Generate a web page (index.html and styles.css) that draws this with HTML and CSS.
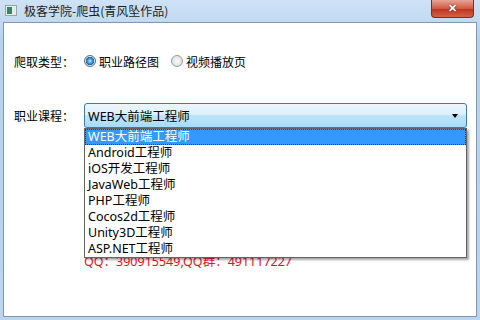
FILE: index.html
```html
<html>
<head>
	<meta charset="UTF-8">
	<title>极客学院-爬虫</title>
	<link rel="stylesheet" href="styles.css">
</head>
<body>
	<div id="window">
		<div id="titleBar">
			<span class="appIcon"><span></span></span>
			<span class="titleText">极客学院-爬虫(青风坠作品)</span>
			<span class="closeButton">&#x2715;</span>
		</div>
		<div id="client">
			<div class="formRow typeRow">
				<span class="fieldLabel">爬取类型：</span>
				<label class="radio"><span class="radioDot checked"></span>职业路径图</label>
				<label class="radio"><span class="radioDot"></span>视频播放页</label>
			</div>
			<div class="formRow">
				<span class="fieldLabel">职业课程：</span>
				<div class="combo">
					<div class="comboBox">
						<span>WEB大前端工程师</span>
						<span class="arrow"></span>
					</div>
					<ul class="dropList">
						<li class="selected">WEB大前端工程师</li>
						<li>Android工程师</li>
						<li>iOS开发工程师</li>
						<li>JavaWeb工程师</li>
						<li>PHP工程师</li>
						<li>Cocos2d工程师</li>
						<li>Unity3D工程师</li>
						<li>ASP.NET工程师</li>
					</ul>
				</div>
			</div>
			<div class="contact">QQ：390915549,QQ群：491117227</div>
		</div>
	</div>
</body>
</html>
```

FILE: styles.css
```css
body {
	margin: 0;
	font-family: "Noto Sans", "Noto Sans CJK SC", sans-serif;
	font-size: 12.5px;
	color: #000;
}
#window {
	width: 480px;
	height: 320px;
	box-sizing: border-box;
	display: flex;
	flex-direction: column;
	background: linear-gradient(#cfe2f6, #b8d2ec 40px, #bcd4ee);
	padding: 0 3px 3px 3px;
}
#titleBar {
	height: 22px;
	flex: none;
	display: flex;
	align-items: flex-start;
	position: relative;
}
.appIcon {
	width: 12px;
	height: 11px;
	margin: 5px 0 0 2px;
	background: #e8ece8;
	border: 1px solid #9aa7a0;
	box-sizing: border-box;
	display: flex;
}
.appIcon span {
	width: 5px;
	margin: 1px;
	background: #2f8a6c;
}
.titleText {
	margin: 3px 0 0 7px;
	font-size: 12px;
	line-height: 16px;
	font-family: "Noto Sans CJK SC", sans-serif;
	color: #1e1e1e;
}
.closeButton { /* sits over the frame corner */
	position: absolute;
	top: 0;
	right: 3px;
	width: 43px;
	height: 18px;
	box-sizing: border-box;
	border: 1px solid #6d3228;
	border-top: none;
	border-radius: 0 0 4px 4px;
	background: linear-gradient(#e9a496, #cf5a44 50%, #c0361f 55%, #d2614a);
	color: #fff;
	font-size: 11px;
	font-weight: bold;
	text-align: center;
	line-height: 16px;
	text-shadow: 0 0 2px #5a1a10;
}
#client {
	flex: 1;
	background: #fff;
	border: 1px solid #7f97b0;
	padding: 30px 0 0 10px;
}
.formRow {
	display: flex;
	align-items: center;
}
.typeRow {
	height: 16px;
	margin-bottom: 34px;
}
.fieldLabel {
	width: 70px;
	flex: none;
	font-family: "Noto Sans CJK SC", sans-serif;
	font-size: 12px;
}
.radio {
	display: flex;
	align-items: center;
	margin-right: 12px;
	font-family: "Noto Sans CJK SC", sans-serif;
	font-size: 12px;
}
.radioDot {
	width: 12px;
	height: 12px;
	border-radius: 50%;
	border: 1px solid #8e9aa6;
	background: radial-gradient(#fafafa, #d4d8dc);
	margin-right: 3px;
	box-sizing: border-box;
	flex: none;
}
.radioDot.checked {
	background: radial-gradient(#b9e3f8 0, #2a86c8 3px, #1d5f96 4px, #e8eef4 4.5px, #d0d8e0);
	border-color: #4c6e90;
}
.combo {
	position: relative;
	width: 383px;
}
.comboBox {
	height: 25px;
	box-sizing: border-box;
	border: 1px solid #3d7bad;
	border-radius: 3px;
	background: linear-gradient(#ecf6fd, #dcf0fc 45%, #bde5fb 50%, #a8dbf8);
	display: flex;
	align-items: center;
	justify-content: space-between;
	padding: 0 8px 0 3px;
}
.arrow {
	width: 0;
	height: 0;
	border-left: 3.5px solid transparent;
	border-right: 3.5px solid transparent;
	border-top: 4px solid #000;
}
.dropList { /* open dropdown covers the text below */
	position: absolute;
	top: 25px;
	left: 0;
	right: 0;
	margin: 0;
	padding: 0;
	list-style: none;
	background: #fff;
	border: 1px solid #646464;
	box-shadow: 2px 2px 2px rgba(0, 0, 0, 0.35);
	z-index: 1;
}
.dropList li {
	height: 16px;
	line-height: 16px;
	padding-left: 3px;
	white-space: nowrap;
}
.dropList li.selected {
	background: #3399ff;
	color: #fff;
	outline: 1px dotted #1a3c66;
	outline-offset: -1px;
}
.contact {
	margin: 126px 0 0 70px;
	color: #e8101c;
	line-height: 16px;
}
```
